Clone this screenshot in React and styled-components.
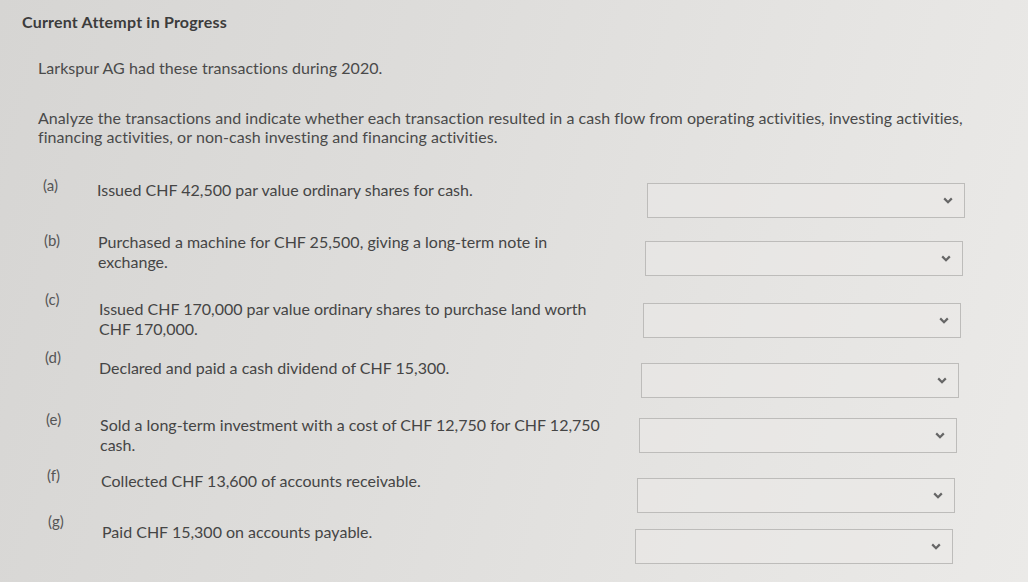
import React from 'react';
import styled, { createGlobalStyle } from 'styled-components';

const GlobalStyle = createGlobalStyle`
  html, body {
    margin: 0;
    padding: 0;
    width: 1028px;
    height: 582px;
    overflow: hidden;
  }
  body {
    font-family: Lato, "Open Sans", sans-serif;
    background: linear-gradient(105deg, #d6d5d3 0%, #dedddb 40%, #e6e5e3 75%, #ebeae8 100%);
  }
`;

const Page = styled.div`
  padding: 12px 0 0 22px;
  color: #4a4a4a;
`;

const Heading = styled.div`
  font-size: 16px;
  font-weight: 700;
  color: #3c3c3c;
  letter-spacing: 0.2px;
  line-height: 20px;
`;

const Body = styled.div`
  padding: 0 0 0 16px;
`;

const Para = styled.p`
  margin: ${(p) => p.$top}px 0 0 0;
  max-width: 940px;
  font-size: 16px;
  line-height: 19px;
  letter-spacing: 0.05px;
`;

const List = styled.div`
  display: flex;
  flex-direction: column;
  margin-top: 34px;
`;

const Row = styled.div`
  display: grid;
  grid-template-columns: 54px 1fr 318px;
  align-items: start;
  height: ${(p) => p.$h}px;
  padding-left: ${(p) => 5 + p.$lead}px;
  padding-right: ${(p) => 63 + p.$shift}px;
`;

const Label = styled.div`
  font-size: 15px;
  line-height: 20px;
  margin-top: ${(p) => p.$off}px;
  color: #555;
`;

const Desc = styled.div`
  font-size: 16px;
  line-height: 20px;
  letter-spacing: 0;
  max-width: 500px;
  color: #454545;
`;

const Select = styled.div`
  height: 35px;
  margin-top: ${(p) => p.$top}px;
  border: 1px solid #bdbcba;
  background: rgba(235, 234, 232, 0.55);
  display: flex;
  align-items: center;
  justify-content: flex-end;
  padding-right: 11px;
  box-sizing: border-box;
  color: #666;
`;

const rows = [
  { key: 'a', text: 'Issued CHF 42,500 par value ordinary shares for cash.', h: 52, sel: 3, lab: -5, lead: 0 },
  { key: 'b', text: 'Purchased a machine for CHF 25,500, giving a long-term note in exchange.', h: 67, sel: 9, lab: -2, lead: 1 },
  { key: 'c', text: 'Issued CHF 170,000 par value ordinary shares to purchase land worth CHF 170,000.', h: 59, sel: 4, lab: -10, lead: 2 },
  { key: 'd', text: 'Declared and paid a cash dividend of CHF 15,300.', h: 57, sel: 5, lab: -11, lead: 2 },
  { key: 'e', text: 'Sold a long-term investment with a cost of CHF 12,750 for CHF 12,750 cash.', h: 56, sel: 3, lab: -6, lead: 3 },
  { key: 'f', text: 'Collected CHF 13,600 of accounts receivable.', h: 51, sel: 7, lab: -6, lead: 4 },
  { key: 'g', text: 'Paid CHF 15,300 on accounts payable.', h: 52, sel: 7, lab: -11, lead: 5 },
];

const Chevron = () => (
  <svg width="10" height="7" viewBox="0 0 10 7">
    <path d="M1.2 1.4 L5 5.2 L8.8 1.4" fill="none" stroke="currentColor" strokeWidth="2.2" />
  </svg>
);

export default function App() {
  return (
    <>
      <GlobalStyle />
      <Page>
        <Heading>Current Attempt in Progress</Heading>
        <Body>
          <Para $top={26}>Larkspur AG had these transactions during 2020.</Para>
          <Para $top={31}>
            Analyze the transactions and indicate whether each transaction resulted in a cash flow from operating
            activities, investing activities, financing activities, or non-cash investing and financing activities.
          </Para>
          <List>
            {rows.map((r, i) => (
              <Row key={r.key} $h={r.h} $shift={i * 2} $lead={r.lead}>
                <Label $off={r.lab}>({r.key})</Label>
                <Desc>{r.text}</Desc>
                <Select $top={r.sel}>
                  <Chevron />
                </Select>
              </Row>
            ))}
          </List>
        </Body>
      </Page>
    </>
  );
}
